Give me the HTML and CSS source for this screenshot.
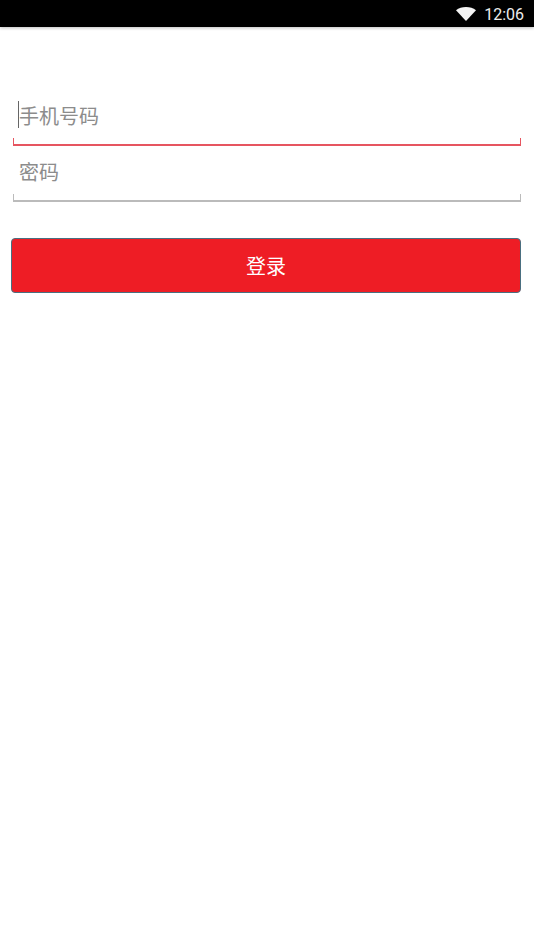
FILE: index.html
```html
<!DOCTYPE html>
<html lang="zh">
<head>
<meta charset="utf-8">
<title>登录</title>
<link rel="stylesheet" href="styles.css">
</head>
<body>
<header class="status-bar">
  <svg class="wifi" width="20" height="14" viewBox="0 0 20 14"><path d="M0 3.200C2.700 1.100 6.200 0 10 0s7.300 1.100 10 3.200L10 14z" fill="#f4f4f4"/></svg>
  <span class="time">12:06</span>
</header>
<main class="form">
  <div class="field field-active">
    <span class="caret"></span><span class="placeholder">手机号码</span>
  </div>
  <div class="field">
    <span class="placeholder">密码</span>
  </div>
  <button class="login" type="button">登录</button>
</main>
</body>
</html>
```
FILE: styles.css
```css
* { box-sizing: border-box; }
html, body { margin: 0; height: 100%; background: #fff; }
body { font-family: "Noto Sans CJK SC", "Noto Sans", sans-serif; overflow: hidden; }
.status-bar {
  height: 27px;
  background: #000;
  display: flex;
  align-items: center;
  justify-content: flex-end;
  padding-right: 10px;
  gap: 8px;
  box-shadow: 0 1px 3px rgba(0,0,0,.25);
}
.wifi { margin-top: 1px; }
.time { font-family: Roboto, sans-serif; font-size: 16px; color: #ececec; line-height: 27px; margin-top: 2px; }
.form { padding: 63px 13px 0 11px; display: flex; flex-direction: column; }
.field {
  position: relative;
  height: 56px;
  margin-left: 2px;
  padding: 6px 0 0 6px;
  display: flex;
  align-items: flex-start;
}
.field::after {
  content: "";
  position: absolute;
  left: 0; right: 0; bottom: 0;
  height: 6px;
  border: 2px solid #bbb;
  border-top: 0;
  border-left-width: 1.5px;
  border-right-width: 1.5px;
}
.field-active::after { border-color: #e65560; }
.placeholder { font-size: 20px; line-height: 40px; color: #8c8c8c; font-weight: 400; }
.caret { position: absolute; left: 5px; top: 11px; width: 1px; height: 27px; background: #666; }
.login {
  margin-top: 36px;
  height: 55px;
  border: 1px solid #4a6f80;
  border-radius: 4px;
  background: #ee1d25;
  color: #fff;
  font-family: inherit;
  font-size: 20px;
  font-weight: 400;
  line-height: 50px;
  padding: 0;
}
```
